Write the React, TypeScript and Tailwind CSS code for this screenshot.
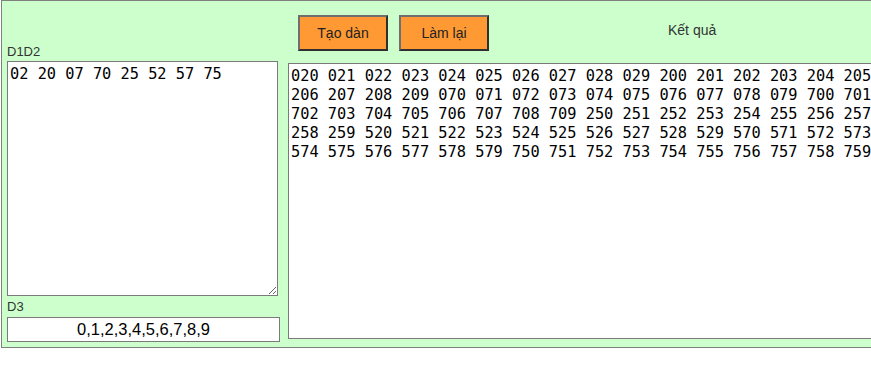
import React from "react";

const pairs = ["02", "20", "07", "70", "25", "52", "57", "75"];
const digits = ["0", "1", "2", "3", "4", "5", "6", "7", "8", "9"];

export default function App() {
  const result = pairs.flatMap((p) => digits.map((d) => p + d)).join(" ");

  return (
    <div className="w-full overflow-hidden bg-white h-[367px]">
      <div className="ml-[1px] w-[960px] h-[348px] border border-[#808080] bg-[#ccffcc] flex px-[5px] font-['Liberation_Sans',Arial,sans-serif]">
        {/* left column */}
        <div className="w-[273px] flex flex-col pt-[43px]">
          <label className="text-[13px] leading-[15px] text-[#333] mb-[2px]">D1D2</label>
          <textarea
            className="w-[271px] h-[235px] border border-[#7a7a7a] bg-white px-[2px] pt-[3px] text-[15.3px] leading-[19px] text-black font-['DejaVu_Sans_Mono',monospace] outline-none"
            defaultValue="02 20 07 70 25 52 57 75"
          />
          <label className="mt-[3px] text-[13px] leading-[15px] text-[#333] mb-[3px]">D3</label>
          <input
            className="w-[273px] h-[25px] border border-[#7a7a7a] bg-white text-center text-[16.5px] text-black outline-none"
            defaultValue="0,1,2,3,4,5,6,7,8,9"
          />
        </div>

        {/* right column */}
        <div className="ml-[8px] flex flex-col pt-[14px]">
          <div className="flex items-start h-[36px]">
            <button className="ml-[10px] w-[90px] h-[36px] bg-[#ff9933] border-2 border-t-[#6f6f6f] border-l-[#6f6f6f] border-b-[#2f2f2f] border-r-[#2f2f2f] text-[14px] text-[#222]">
              Tạo dàn
            </button>
            <button className="ml-[11px] w-[90px] h-[36px] bg-[#ff9933] border-2 border-t-[#6f6f6f] border-l-[#6f6f6f] border-b-[#2f2f2f] border-r-[#2f2f2f] text-[14px] text-[#222]">
              Làm lại
            </button>
            <span className="ml-[179px] mt-[7px] text-[14px] leading-[16px] text-[#333]">Kết quả</span>
          </div>
          <textarea
            className="mt-[12px] w-[620px] h-[276px] border border-[#7a7a7a] bg-white px-[2px] pt-[3px] text-[15.3px] leading-[19px] text-black font-['DejaVu_Sans_Mono',monospace] outline-none"
            defaultValue={result}
          />
        </div>
      </div>
    </div>
  );
}
